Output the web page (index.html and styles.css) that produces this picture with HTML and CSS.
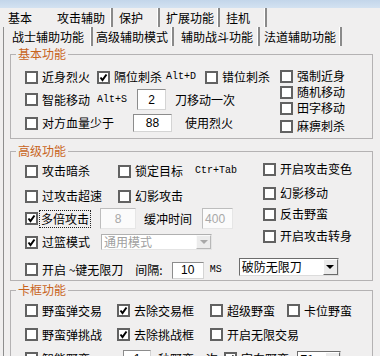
FILE: index.html
```html
<!DOCTYPE html>
<html>
<head>
<meta charset="utf-8">
<link rel="stylesheet" href="styles.css">
</head>
<body>
<div class="topstrip"></div>
<div class="tabs1">
  <div class="tab first">基本</div>
  <div class="tab sel">攻击辅助</div>
  <div class="tab">保护</div>
  <div class="tab">扩展功能</div>
  <div class="tab">挂机</div>
</div>
<div class="panel">
  <div class="tabs2">
    <div class="tab2 sel">战士辅助功能</div>
    <div class="tab2">高级辅助模式</div>
    <div class="tab2">辅助战斗功能</div>
    <div class="tab2">法道辅助功能</div>
  </div>

  <fieldset class="group g1">
    <legend>基本功能</legend>
    <div class="gbody g1body">
      <div class="left1">
        <div class="row r1a">
          <span class="ck"><span class="cb"></span>近身烈火</span>
          <span class="ck ml7"><span class="cb on"><svg viewBox="0 0 9 9"><polyline points="1.5,4.5 3.5,7 7.5,1.5"/></svg></span>隔位刺杀</span>
          <span class="mono ml4">Alt+D</span>
          <span class="ck ml9"><span class="cb"></span>错位刺杀</span>
        </div>
        <div class="row r1b">
          <span class="ck"><span class="cb"></span>智能移动</span>
          <span class="mono ml7">Alt+S</span>
          <span class="inp w29 ml10">2</span>
          <span class="ml9">刀移动一次</span>
        </div>
        <div class="row r1c">
          <span class="ck"><span class="cb"></span>对方血量少于</span>
          <span class="inp w39 ml19">88</span>
          <span class="ml13">使用烈火</span>
        </div>
      </div>
      <div class="right1">
        <span class="ck item"><span class="cb"></span>强制近身</span>
        <span class="ck item"><span class="cb"></span>随机移动</span>
        <span class="ck item"><span class="cb"></span>田字移动</span>
        <span class="ck item i4"><span class="cb"></span>麻痹刺杀</span>
      </div>
    </div>
  </fieldset>

  <fieldset class="group g2">
    <legend>高级功能</legend>
    <div class="gbody">
      <div class="g2top">
        <div class="left2">
          <div class="row r2a">
            <span class="ck"><span class="cb"></span>攻击暗杀</span>
            <span class="ck ml28"><span class="cb"></span>锁定目标</span>
            <span class="mono ml12">Ctr+Tab</span>
          </div>
          <div class="row r2b">
            <span class="ck"><span class="cb"></span>过攻击超速</span>
            <span class="ck ml16"><span class="cb"></span>幻影攻击</span>
          </div>
          <div class="row r2c">
            <span class="ck ckf"><span class="cb on"><svg viewBox="0 0 9 9"><polyline points="1.5,4.5 3.5,7 7.5,1.5"/></svg></span><span class="focus">多倍攻击</span></span>
            <span class="inp dis w36 ml10">8</span>
            <span class="ml8">缓冲时间</span>
            <span class="inp dis w31 ml10 lefttext">400</span>
          </div>
          <div class="row r2d">
            <span class="ck"><span class="cb on"><svg viewBox="0 0 9 9"><polyline points="1.5,4.5 3.5,7 7.5,1.5"/></svg></span>过篮模式</span>
            <span class="sel-box dis w111 ml11"><span class="val">通用模式</span><span class="btn"><i class="tri"></i></span></span>
          </div>
        </div>
        <div class="right2">
          <span class="ck item"><span class="cb"></span>开启攻击变色</span>
          <span class="ck item j2"><span class="cb"></span>幻影移动</span>
          <span class="ck item j3"><span class="cb"></span>反击野蛮</span>
          <span class="ck item j4"><span class="cb"></span>开启攻击转身</span>
        </div>
      </div>
      <div class="row r2e">
        <span class="ck"><span class="cb"></span>开启 ~键无限刀</span>
        <span class="ml12">间隔:</span>
        <span class="inp w32 ml9 h17">10</span>
        <span class="mono ml6">MS</span>
        <span class="sel-box w100 ml17 up"><span class="val">破防无限刀</span><span class="btn"><i class="tri"></i></span></span>
      </div>
    </div>
  </fieldset>

  <fieldset class="group g3">
    <legend>卡框功能</legend>
    <div class="gbody">
      <div class="grid3">
        <span class="ck"><span class="cb"></span>野蛮弹交易</span>
        <span class="ck"><span class="cb on"><svg viewBox="0 0 9 9"><polyline points="1.5,4.5 3.5,7 7.5,1.5"/></svg></span>去除交易框</span>
        <span class="ck"><span class="cb"></span>超级野蛮</span>
        <span class="ck"><span class="cb"></span>卡位野蛮</span>
        <span class="ck"><span class="cb"></span>野蛮弹挑战</span>
        <span class="ck"><span class="cb on"><svg viewBox="0 0 9 9"><polyline points="1.5,4.5 3.5,7 7.5,1.5"/></svg></span>去除挑战框</span>
        <span class="ck span2"><span class="cb"></span>开启无限交易</span>
      </div>
      <div class="row r3c">
        <span class="ck"><span class="cb"></span>智能野蛮</span>
        <span class="inp w28 ml33">1</span>
        <span class="ml7">秒野蛮一次</span>
        <span class="ck ml6"><span class="cb on"><svg viewBox="0 0 9 9"><polyline points="1.5,4.5 3.5,7 7.5,1.5"/></svg></span>定向野蛮</span>
        <span class="sel-box w44 ml8"><span class="val">Z1</span><span class="btn"><i class="tri"></i></span></span>
      </div>
    </div>
  </fieldset>
</div>
</body>
</html>
```

FILE: styles.css
```css
html, body {
  margin: 0;
  padding: 0;
}
body {
  width: 380px;
  height: 356px;
  overflow: hidden;
  background: #f0efef;
  font-family: "Noto Sans CJK SC", "Noto Sans", sans-serif;
  font-size: 12px;
  line-height: 14px;
  color: #000;
}
.topstrip {
  height: 8px;
  background: linear-gradient(#c3d6ea, #d3e2f1);
}
.tabs1 {
  display: flex;
  height: 19px;
}
.tab {
  box-sizing: border-box;
  height: 19px;
  padding: 3px 4px 0 6px;
  min-width: 47px;
  border-right: 2px solid #8a8a8a;
  box-shadow: inset -1px 0 0 #ffffff;
  white-space: nowrap;
}
.tab.first {
  padding-left: 8px;
  width: 49px;
  border-right: none;
  box-shadow: none;
}
.tab.sel {
  padding-left: 8px;
  padding-right: 6px;
  width: 64px;
}
.panel {
  margin-left: 3px;
  border-left: 1px solid #8e8e8e;
  height: 329px;
}
.tabs2 {
  display: flex;
  height: 19px;
}
.tab2 {
  box-sizing: border-box;
  height: 19px;
  padding: 3px 4px 0 4px;
  border-right: 2px solid #8a8a8a;
  box-shadow: inset -1px 0 0 #ffffff;
  white-space: nowrap;
}
.tab2:nth-child(1) { padding-left: 8px; padding-right: 7px; }
.tab2:nth-child(2) { padding-left: 3px; padding-right: 4px; }
.tab2:nth-child(3) { padding-left: 7px; padding-right: 5px; }
.tab2:nth-child(4) { padding-left: 4px; padding-right: 4px; }

.group {
  box-sizing: border-box;
  width: 363px;
  margin: 0 0 0 6px;
  padding: 0;
  border: 1px solid #b4b2b3;
  min-width: 0;
}
.group legend {
  margin-left: 5px;
  padding: 0 2px;
  line-height: 14px;
  color: #c8641c;
}
.g1 { margin-top: 1px; }
.g2 { margin-top: 5px; }
.g3 { margin-top: 2px; height: 80px; }

.gbody {
  padding-left: 14px;
}
.g1body {
  display: flex;
  padding-bottom: 4px;
}
.left1 {
  width: 255px;
  padding-top: 7px;
}
.row {
  display: flex;
  align-items: center;
  white-space: nowrap;
}
.r1a { height: 18px; }
.r1b { height: 21px; margin-top: 3px; }
.r1c { height: 18px; margin-top: 4px; }
.right1 {
  display: flex;
  flex-direction: column;
  padding-top: 7px;
}
.item {
  height: 16px;
}
.right1 .i4 { margin-top: 2px; }

.ck {
  display: inline-flex;
  align-items: center;
  white-space: nowrap;
}
.cb {
  box-sizing: border-box;
  width: 13px;
  height: 13px;
  border: 2px solid #626262;
  background: #fff;
  margin-right: 4px;
  flex: none;
  display: flex;
  align-items: center;
  justify-content: center;
}
.cb svg {
  width: 9px;
  height: 9px;
  display: block;
}
.cb svg polyline {
  fill: none;
  stroke: #000;
  stroke-width: 2;
}
.mono {
  font-family: "Liberation Mono", "DejaVu Sans Mono", monospace;
  font-size: 10px;
}
.inp {
  box-sizing: border-box;
  display: inline-flex;
  align-items: center;
  justify-content: center;
  height: 100%;
  background: #fff;
  border: 1px solid;
  border-color: #8c8c8c #d4d4d4 #d4d4d4 #8c8c8c;
  font-family: "Liberation Sans", "Noto Sans", sans-serif;
  font-size: 12px;
}
.inp.dis {
  color: #a8a8a8;
  background: #fbfbfb;
  border-color: #bdbdbd #e6e6e6 #e6e6e6 #bdbdbd;
}
.inp.lefttext { justify-content: flex-start; padding-left: 2px; }
.inp.h17 { height: 17px; margin-top: 1px; }
.w28 { width: 28px; }
.w29 { width: 29px; }
.w31 { width: 31px; }
.w32 { width: 32px; }
.w36 { width: 36px; }
.w39 { width: 39px; }
.w44 { width: 44px; }
.w100 { width: 100px; }
.w111 { width: 111px; }
.ml4 { margin-left: 4px; }
.ml6 { margin-left: 6px; }
.ml7 { margin-left: 7px; }
.ml8 { margin-left: 8px; }
.ml9 { margin-left: 9px; }
.ml10 { margin-left: 10px; }
.ml11 { margin-left: 11px; }
.ml12 { margin-left: 12px; }
.ml13 { margin-left: 13px; }
.ml16 { margin-left: 16px; }
.ml17 { margin-left: 17px; }
.ml19 { margin-left: 19px; }
.ml28 { margin-left: 28px; }
.ml33 { margin-left: 33px; }

.g2top {
  display: flex;
}
.left2 {
  width: 238px;
  padding-top: 4px;
}
.r2a { height: 18px; }
.r2b { height: 18px; margin-top: 7px; }
.r2c { height: 21px; margin-top: 3px; }
.r2d { height: 18px; margin-top: 4px; }
.r2e { height: 19px; margin-top: 9px; padding-bottom: 1px; }
.ckf .cb { margin-right: 2px; }
.focus {
  padding: 1px 1px;
  outline: 1px dotted #222;
  line-height: 14px;
}
.right2 {
  display: flex;
  flex-direction: column;
  padding-top: 3px;
}
.right2 .j2 { margin-top: 8px; }
.right2 .j3 { margin-top: 5px; }
.right2 .j4 { margin-top: 6px; }

.sel-box {
  box-sizing: border-box;
  display: inline-flex;
  height: 16px;
  background: #fff;
  border: 1px solid;
  border-color: #6c6c6c #dcdcdc #dcdcdc #6c6c6c;
}
.sel-box.up { height: 18px; margin-top: -5px; }
.sel-box .val {
  flex: 1;
  padding-left: 2px;
  line-height: 14px;
  white-space: nowrap;
}
.sel-box.up .val { line-height: 16px; }
.sel-box .btn {
  box-sizing: border-box;
  width: 15px;
  background: #ececec;
  border: 1px solid;
  border-color: #ffffff #6a6a6a #6a6a6a #ffffff;
  display: flex;
  align-items: center;
  justify-content: center;
}
.tri {
  width: 0;
  height: 0;
  border-left: 4px solid transparent;
  border-right: 4px solid transparent;
  border-top: 4px solid #000;
}
.sel-box.dis {
  border-color: #b0b0b0 #e4e4e4 #e4e4e4 #b0b0b0;
  color: #a0a0a0;
}
.sel-box.dis .btn {
  border-color: #fafafa #b8b8b8 #b8b8b8 #fafafa;
}
.sel-box.dis .tri { border-top-color: #a8a8a8; }

.grid3 {
  display: grid;
  grid-template-columns: 92px 93px 77px auto;
  grid-auto-rows: 17px;
  row-gap: 7px;
  align-items: center;
  padding-top: 5px;
}
.grid3 .span2 { grid-column: span 2; }
.r3c { height: 17px; margin-top: 7px; }
```
